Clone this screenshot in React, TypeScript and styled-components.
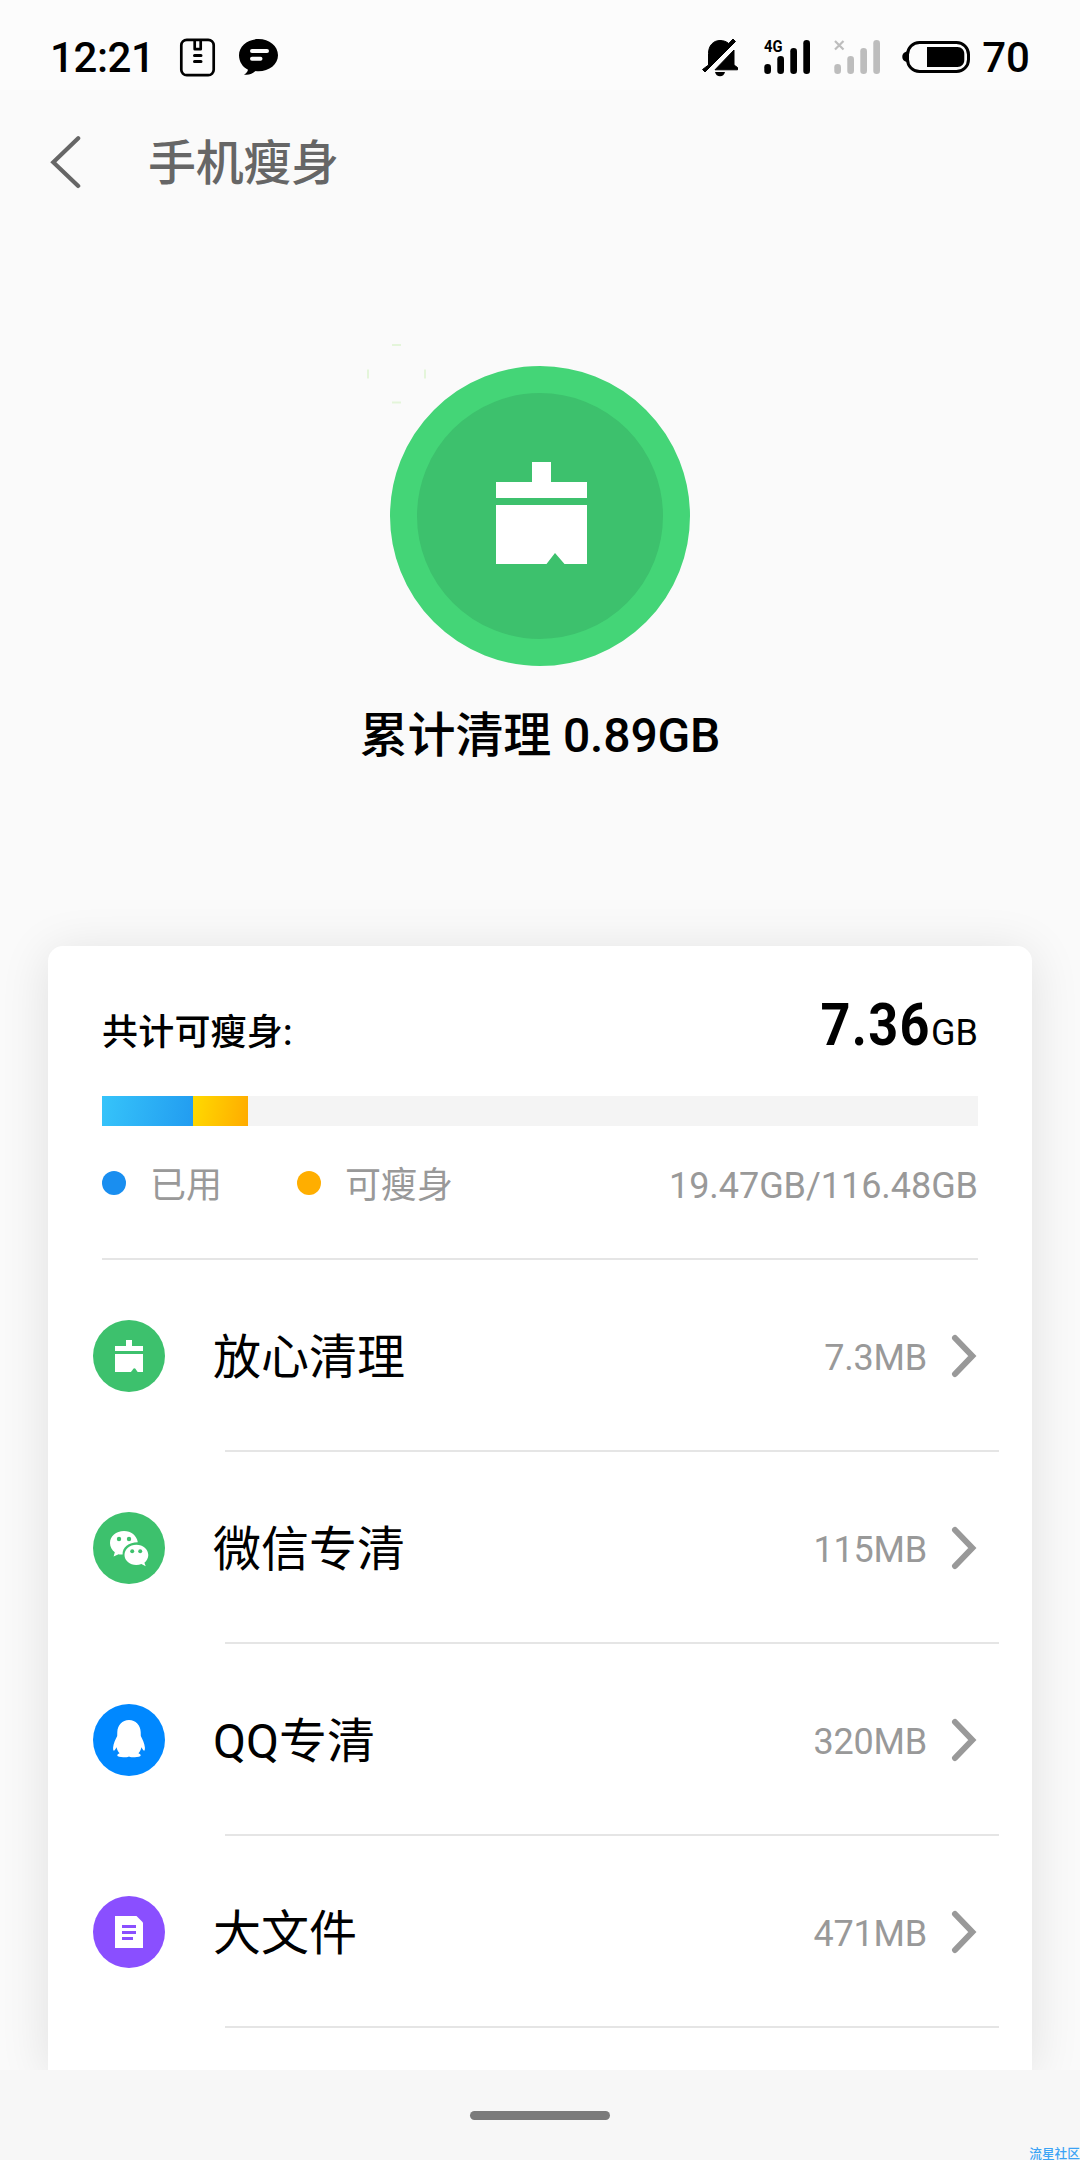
import React from "react";
import styled, { createGlobalStyle } from "styled-components";

const GlobalStyle = createGlobalStyle`
  html, body { margin: 0; padding: 0; background: #fafafa; }
  body { overflow: hidden; }
  * { box-sizing: border-box; }
`;

const Screen = styled.div`
  position: relative;
  display: flex;
  flex-direction: column;
  width: 1080px;
  height: 2160px;
  overflow: hidden;
  background: #fafafa;
  color: #000;
  font-family: Roboto, "Noto Sans CJK SC", sans-serif;
`;

const StatusBar = styled.header`
  display: flex;
  flex: none;
  align-items: center;
  justify-content: space-between;
  height: 90px;
  padding: 24px 50px 0 50px;
  background: #fcfcfc;
`;

const StatusGroup = styled.div`
  display: flex;
  align-items: center;
  height: 66px;
`;

const StatusText = styled.span<{ $width: number; $end?: boolean }>`
  width: ${(p) => p.$width}px;
  padding-top: 1px;
  text-align: ${(p) => (p.$end ? "right" : "left")};
  font-size: 42px;
  font-weight: 500;
  letter-spacing: ${(p) => (p.$end ? 0 : -0.4)}px;
  line-height: 66px;
  white-space: nowrap;
`;

const StatusIcon = styled.svg<{ $gap: number }>`
  flex: none;
  display: block;
  margin-left: ${(p) => p.$gap}px;
  overflow: visible;
`;

const TitleBar = styled.div`
  display: flex;
  flex: none;
  align-items: center;
  gap: 67px;
  height: 144px;
  padding-left: 50px;
`;

const Title = styled.h1`
  margin: 0;
  padding-top: 3px;
  color: #666;
  font-size: 48px;
  font-weight: 500;
  letter-spacing: -0.3px;
  line-height: 72px;
`;

const Hero = styled.section`
  display: flex;
  flex: none;
  flex-direction: column;
  align-items: center;
  height: 712px;
  padding-top: 132px;
`;

const CleanButton = styled.div`
  position: relative;
  display: flex;
  align-items: center;
  justify-content: center;
  width: 300px;
  height: 300px;
  border: 27px solid #44d577;
  border-radius: 50%;
  background: #3dc16d;
`;

const Spark = styled.svg`
  position: absolute;
  left: -50px;
  top: -49px;
`;

const HeroText = styled.p`
  margin: 34px 0 0;
  font-size: 48px;
  font-weight: 500;
  letter-spacing: -0.15px;
  line-height: 72px;
  white-space: nowrap;
`;

const Card = styled.main`
  flex: 1;
  min-height: 0;
  margin: 0 48px;
  border-radius: 15px 15px 0 0;
  background: #fff;
  box-shadow: 0 6px 50px rgba(0, 0, 0, 0.11);
`;

const Summary = styled.section`
  display: flex;
  flex-direction: column;
  height: 314px;
  margin: 0 54px;
  border-bottom: 2px solid #e5e5e5;
`;

const TotalRow = styled.div`
  display: flex;
  align-items: baseline;
  justify-content: space-between;
  height: 150px;
  padding-top: 43px;
`;

const TotalLabel = styled.span`
  font-size: 36px;
  font-weight: 500;
  letter-spacing: 0.2px;
  line-height: 72px;
`;

const TotalValue = styled.span`
  display: flex;
  align-items: baseline;
  line-height: 72px;
`;

const TotalNumber = styled.b`
  font-size: 60px;
  font-weight: 700;
  letter-spacing: 1.5px;
  transform: scaleX(0.87);
  transform-origin: right;
`;

const TotalUnit = styled.span`
  font-size: 36px;
  margin-left: 0;
`;

const Bar = styled.div`
  display: flex;
  height: 30px;
  background: #f4f4f4;
`;

const Segment = styled.div<{ $from: string; $to: string }>`
  background: linear-gradient(100deg, ${(p) => p.$from}, ${(p) => p.$to});
`;

const Legend = styled.div`
  display: flex;
  align-items: center;
  height: 114px;
  color: #999;
  font-size: 36px;
  line-height: 54px;
`;

const LegendItem = styled.span<{ $color: string; $width: number }>`
  display: flex;
  align-items: center;
  gap: 24px;
  width: ${(p) => p.$width}px;
  white-space: nowrap;
  &::before {
    content: "";
    width: 24px;
    height: 24px;
    border-radius: 50%;
    background: ${(p) => p.$color};
  }
`;

const LegendText = styled.span`
  padding-top: 5px;
`;

const Usage = styled(LegendText)`
  margin-left: auto;
  letter-spacing: -0.05px;
`;

const Row = styled.div`
  display: flex;
  align-items: center;
  height: 192px;
  padding: 0 55px 0 45px;
  background: linear-gradient(#e5e5e5, #e5e5e5) 177px 100% / 774px 2px no-repeat;
`;

const RowBadge = styled.svg`
  flex: none;
  display: block;
`;

const RowName = styled.span`
  flex: 1;
  margin-left: 48px;
  padding-top: 4px;
  font-size: 48px;
  line-height: 72px;
`;

const RowSize = styled.span`
  margin-right: 24px;
  padding-top: 4px;
  color: #999;
  font-size: 36px;
  letter-spacing: -0.2px;
  line-height: 54px;
`;

const NavBar = styled.footer`
  position: relative;
  z-index: 1;
  display: flex;
  flex: none;
  justify-content: center;
  height: 90px;
  padding-top: 41px;
  background: #f7f7f7;
`;

const HomePill = styled.div`
  width: 140px;
  height: 9px;
  border-radius: 5px;
  background: #7b7b7b;
`;

const Watermark = styled.span`
  position: absolute;
  right: 0;
  bottom: 0;
  z-index: 2;
  color: #3ba3f5;
  font-size: 12.700px;
  font-weight: 500;
  line-height: 13px;
  white-space: nowrap;
`;

const NetLabel = styled.text`
  font-size: 16.500px;
  font-weight: 700;
`;

const Signal = ({ color, children, gap }: { color: string; gap: number; children: React.ReactNode }) => (
  <StatusIcon $gap={gap} width="47" height="36" viewBox="0 0 47 36" fill={color}>
    <rect x="0.3" y="25" width="6.7" height="10" rx="3.3" />
    <rect x="13.3" y="17" width="6.7" height="18" rx="3.3" />
    <rect x="26.3" y="9" width="6.7" height="26" rx="3.3" />
    <rect x="39.3" y="1" width="6.7" height="34" rx="3.3" />
    {children}
  </StatusIcon>
);

const BrushBadge = () => (
  <>
    <circle cx="36" cy="36" r="36" fill="#3dc16d" />
    <path fill="#fff" d="M33 20h6v6h11v5H22v-5h11zM22 34h28v18h-4.600c-1.600 0-2.400-3.800-4-3.800S39 52 37.200 52H22z" />
  </>
);

const WechatBadge = () => (
  <>
    <circle cx="36" cy="36" r="36" fill="#3dc16d" />
    <path
      fill="#fff"
      d="M31 19c-8 0-14 5.300-14 12 0 4 2 7 4.800 9.200l-1.200 4.300 5-2.300c1.300.5 2.500.4 4 .3C29.300 35.500 35.500 30.300 44.800 30.300 43.800 23.500 38 19 31 19z"
    />
    <path
      fill="#fff"
      d="M43.300 32.800c6.800 0 12 4.500 12 10.200 0 3.200-1.600 5.900-3.900 7.700l1.300 3.600-4.300-2.200c-1.600.6-3.200.9-5.100.9-6.600 0-11.800-4.500-11.800-10s5.200-10.200 11.800-10.200z"
    />
    <g fill="#3dc16d">
      <circle cx="26" cy="27" r="2.200" />
      <circle cx="36" cy="27" r="2.200" />
      <circle cx="39.200" cy="39.300" r="2" />
      <circle cx="47.200" cy="39.300" r="2" />
    </g>
  </>
);

const PenguinBadge = () => (
  <>
    <circle cx="36" cy="36" r="36" fill="#0088ff" />
    <path
      fill="#fff"
      d="M36 16C29.200 16 24.600 21 24.300 28L24.200 32C22.400 35.500 20.500 39.500 20.100 43.500C20 46 20.500 47 21.100 46.700C22 46 22.800 44.500 23.600 43.200C24 45.500 25 47.600 26.600 49.300C25.200 49.800 24.200 50.600 24.300 51.600C24.500 53.600 33 53.800 36 52.400C39 53.800 47.500 53.600 47.700 51.600C47.800 50.600 46.800 49.800 45.400 49.300C47 47.600 48 45.500 48.400 43.200C49.200 44.500 50 46 50.900 46.700C51.500 47 52 46 51.900 43.500C51.500 39.500 49.600 35.500 47.800 32L47.700 28C47.400 21 42.800 16 36 16z"
    />
  </>
);

const FileBadge = () => (
  <>
    <circle cx="36" cy="36" r="36" fill="#8a4fff" />
    <path fill="#fff" d="M22 20h21.500l6.500 6.500V52H22z" />
    <path fill="#8a4fff" d="M29 29h14v3H29zM29 35h14v3H29zM29 41h11v3H29z" />
  </>
);

const rows = [
  { name: "放心清理", size: "7.3MB", Icon: BrushBadge },
  { name: "微信专清", size: "115MB", Icon: WechatBadge },
  { name: "QQ专清", size: "320MB", Icon: PenguinBadge },
  { name: "大文件", size: "471MB", Icon: FileBadge },
];

const segments = [
  { from: "#36c4fa", to: "#229cf0", width: 91 },
  { from: "#ffda00", to: "#ffab00", width: 55 },
];

export default function App() {
  return (
    <Screen>
      <GlobalStyle />
      <StatusBar>
        <StatusGroup>
          <StatusText $width={102}>12:21</StatusText>
          <StatusIcon $gap={28} width="35" height="39" viewBox="0 0 35 39" fill="none" stroke="#000">
            <rect x="1.300" y="1.800" width="32.400" height="35.400" rx="5.500" strokeWidth="2.700" />
            <path d="M14.700 2v9.200h6V2" strokeWidth="2.700" strokeLinejoin="round" />
            <path d="M14.500 17.500h6.500M14.500 23.500h6.500" strokeWidth="3" strokeLinecap="round" />
          </StatusIcon>
          <StatusIcon $gap={24} width="39" height="38" viewBox="0 0 39 38">
            <path d="M19.500 1C30.300 1 39 8.200 39 17.200s-8.700 16-19.500 16c-1 0-2 0-3-.2C13.500 36 9 37.500 5 36.500c2-1 3.600-2.600 4-4.800C3.500 29 0 23.500 0 17.200 0 8.200 8.700 1 19.500 1z" />
            <path d="M13 13h15M13 20.800h8.500" stroke="#fcfcfc" strokeWidth="4" strokeLinecap="round" />
          </StatusIcon>
        </StatusGroup>
        <StatusGroup>
          <StatusIcon $gap={0} width="38" height="39" viewBox="0 0 38 39">
            <path d="M7.500 27V15.500C7.500 8 12 2.500 19 2.500c3.500 0 6.500 1.100 8.700 3L32 1 34.500 3.500 4 34 1.500 31.500z" stroke="#000" strokeLinejoin="round" />
            <path d="M33 12v15l3.500 2.500v2.300H14z" stroke="#000" strokeLinejoin="round" />
            <path d="M14 34h10c-.6 2.700-2.500 4.300-5 4.300s-4.400-1.600-5-4.300z" />
          </StatusIcon>
          <Signal color="#000" gap={25}>
            <NetLabel x="0" y="13" textLength="18.5" lengthAdjust="spacingAndGlyphs">4G</NetLabel>
          </Signal>
          <Signal color="#bdbdbd" gap={23}>
            <path d="M1 2l8.500 8.500M9.500 2L1 10.500" stroke="#bdbdbd" strokeWidth="2.200" />
          </Signal>
          <StatusIcon $gap={21} width="69" height="34" viewBox="0 0 69 34">
            <path d="M6.500 11.500v10.500C3 22 .3 20 .3 16.700s2.700-5.200 6.200-5.200z" />
            <rect x="5.500" y="2.500" width="61" height="29" rx="12" fill="none" stroke="#000" strokeWidth="3" />
            <path d="M25 7h30.500c4 0 6.800 3 6.800 7v6c0 4-2.800 7-6.800 7H25z" />
          </StatusIcon>
          <StatusText $width={59} $end>70</StatusText>
        </StatusGroup>
      </StatusBar>

      <TitleBar>
        <svg width="31" height="54" viewBox="0 0 31 54" fill="none" stroke="#666" strokeWidth="4.200" strokeLinecap="round">
          <path d="M28.200 3.300L3.300 27.200l24.900 23.700" />
        </svg>
        <Title>手机瘦身</Title>
      </TitleBar>

      <Hero>
        <CleanButton>
          <Spark width="60" height="60" viewBox="0 0 60 60" fill="#e4f5da">
            <path d="M25 0h9v2h-9zM25 57.500h9v2h-9zM0 25.500h2v9H0zM57 25.500h2v9h-2z" />
          </Spark>
          <svg width="246" height="246" viewBox="0 0 246 246" fill="#fff">
            <path d="M115 69h19v20h36v16H79V89h36zM79 112h91v59h-22.500l-9.500-11-8.500 11H79z" />
          </svg>
        </CleanButton>
        <HeroText>累计清理 0.89GB</HeroText>
      </Hero>

      <Card>
        <Summary>
          <TotalRow>
            <TotalLabel>共计可瘦身:</TotalLabel>
            <TotalValue>
              <TotalNumber>7.36</TotalNumber>
              <TotalUnit>GB</TotalUnit>
            </TotalValue>
          </TotalRow>
          <Bar>
            {segments.map((s) => (
              <Segment key={s.from} $from={s.from} $to={s.to} style={{ width: s.width }} />
            ))}
          </Bar>
          <Legend>
            <LegendItem $color="#198ef0" $width={195}>
              <LegendText>已用</LegendText>
            </LegendItem>
            <LegendItem $color="#ffae00" $width={170}>
              <LegendText>可瘦身</LegendText>
            </LegendItem>
            <Usage>19.47GB/116.48GB</Usage>
          </Legend>
        </Summary>
        {rows.map(({ name, size, Icon }) => (
          <Row key={name}>
            <RowBadge width="72" height="72" viewBox="0 0 72 72">
              <Icon />
            </RowBadge>
            <RowName>{name}</RowName>
            <RowSize>{size}</RowSize>
            <svg width="26" height="44" viewBox="0 0 26 44" fill="none" stroke="#999" strokeWidth="6" strokeLinecap="round">
              <path d="M4 4l17.300 18L4 40" />
            </svg>
          </Row>
        ))}
      </Card>

      <NavBar>
        <HomePill />
      </NavBar>
      <Watermark>流星社区</Watermark>
    </Screen>
  );
}
